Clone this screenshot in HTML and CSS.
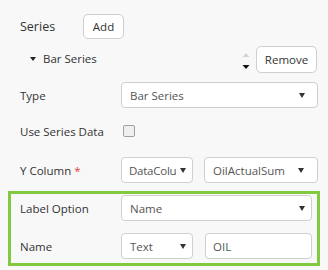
FILE: index.html
```html
<!DOCTYPE html>
<html>
<head>
<meta charset="utf-8">
<link rel="stylesheet" href="styles.css">
</head>
<body>
<div class="panel">
  <div class="series-head">
    <span class="series-title">Series</span>
    <button class="btn btn-add">Add</button>
  </div>
  <div class="series-item">
    <span class="caret"></span>
    <span class="item-name">Bar Series</span>
    <svg class="sorter" width="8" height="18" viewBox="0 0 8 18">
      <polygon points="0.5,5 7.5,5 4,1" fill="#d4d4d4"/>
      <polygon points="0.5,13 7.5,13 4,17" fill="#111"/>
    </svg>
    <button class="btn btn-remove">Remove</button>
  </div>
  <div class="row row-type">
    <span class="label">Type</span>
    <div class="select select-grow"><span class="val">Bar Series</span><i class="arrow"></i></div>
  </div>
  <div class="row row-check">
    <span class="label">Use Series Data</span>
    <span class="checkbox"></span>
  </div>
  <div class="row row-y">
    <span class="label">Y Column <span class="req">*</span></span>
    <div class="select select-sm select-clip"><span class="val">DataColu</span><i class="arrow"></i></div>
    <div class="select select-grow select-gap"><span class="val">OilActualSum</span><i class="arrow"></i></div>
  </div>
  <div class="highlight">
    <div class="row row-inner">
      <span class="label label-inner">Label Option</span>
      <div class="select select-grow select-tight"><span class="val">Name</span><i class="arrow"></i></div>
    </div>
    <div class="row row-inner row-name">
      <span class="label label-inner">Name</span>
      <div class="select select-sm select-tight"><span class="val">Text</span><i class="arrow"></i></div>
      <div class="input">OIL</div>
    </div>
  </div>
</div>
</body>
</html>
```
FILE: styles.css
```css
html, body {
  margin: 0;
  padding: 0;
}
body {
  width: 328px;
  height: 270px;
  overflow: hidden;
  background: #f8f8f8;
  font-family: "Open Sans", "Noto Sans", sans-serif;
  font-size: 11.5px;
  color: #333;
}
.panel {
  padding-top: 14px;
}
.series-head {
  display: flex;
  align-items: center;
  height: 25px;
  padding-left: 20px;
}
.series-title {
  width: 63px;
  font-size: 12.5px;
}
.btn {
  box-sizing: border-box;
  border: 1px solid #cfcfcf;
  border-radius: 5px;
  background: #fff;
  font-family: inherit;
  font-size: 11.5px;
  color: #333;
  padding: 0;
}
.btn-add {
  width: 41px;
  height: 25px;
}
.series-item {
  display: flex;
  align-items: center;
  height: 27px;
  margin-top: 7px;
  padding-left: 30px;
  padding-right: 11px;
}
.caret {
  width: 0;
  height: 0;
  border-left: 3px solid transparent;
  border-right: 3px solid transparent;
  border-top: 4px solid #222;
  margin-top: -2px;
}
.item-name {
  flex: 1;
  margin-left: 7px;
  margin-top: -2px;
}
.sorter {
  margin-right: 6px;
  margin-top: 2px;
}
.btn-remove {
  width: 61px;
  height: 27px;
}
.row {
  display: flex;
  align-items: center;
  height: 26px;
  padding: 0 10px 0 20px;
}
.row-type {
  margin-top: 9px;
}
.row-check {
  margin-top: 12px;
  height: 22px;
}
.row-y {
  margin-top: 15px;
}
.label {
  flex: none;
  width: 101px;
}
.req {
  color: #e0403a;
}
.select {
  box-sizing: border-box;
  height: 26px;
  display: flex;
  align-items: center;
  border: 1px solid #cfcfcf;
  border-radius: 4px;
  background: #fff;
  padding-left: 8px;
  padding-right: 12px;
  color: #555;
}
.val {
  flex: 1;
  overflow: hidden;
  white-space: nowrap;
}
.select-clip {
  padding-left: 7px;
}
.select-clip .val {
  margin-right: 2px;
  letter-spacing: -0.25px;
}
.select-grow {
  flex: 1;
}
.select-sm {
  flex: none;
  width: 72px;
  padding-right: 6px;
}
.select-gap {
  margin-left: 11px;
  padding-right: 13px;
}
.select-tight {
  padding-right: 6px;
}
.arrow {
  flex: none;
  width: 0;
  height: 0;
  border-left: 3.5px solid transparent;
  border-right: 3.5px solid transparent;
  border-top: 5px solid #333;
}
.checkbox {
  box-sizing: border-box;
  width: 12px;
  height: 12px;
  margin-left: 2px;
  border: 1px solid #a0a0a0;
  border-radius: 2px;
  background: #efefef;
}
.highlight {
  margin: 8px 8px 0 8px;
  border: 3px solid #80c940;
  padding: 1px 5px 4px 9px;
}
.row-inner {
  padding: 0;
}
.row-name {
  margin-top: 12px;
}
.label-inner {
  width: 101px;
}
.input {
  box-sizing: border-box;
  flex: 1;
  height: 26px;
  margin-left: 12px;
  display: flex;
  align-items: center;
  border: 1px solid #cfcfcf;
  border-radius: 4px;
  background: #fff;
  padding-left: 7px;
  color: #555;
}
```
